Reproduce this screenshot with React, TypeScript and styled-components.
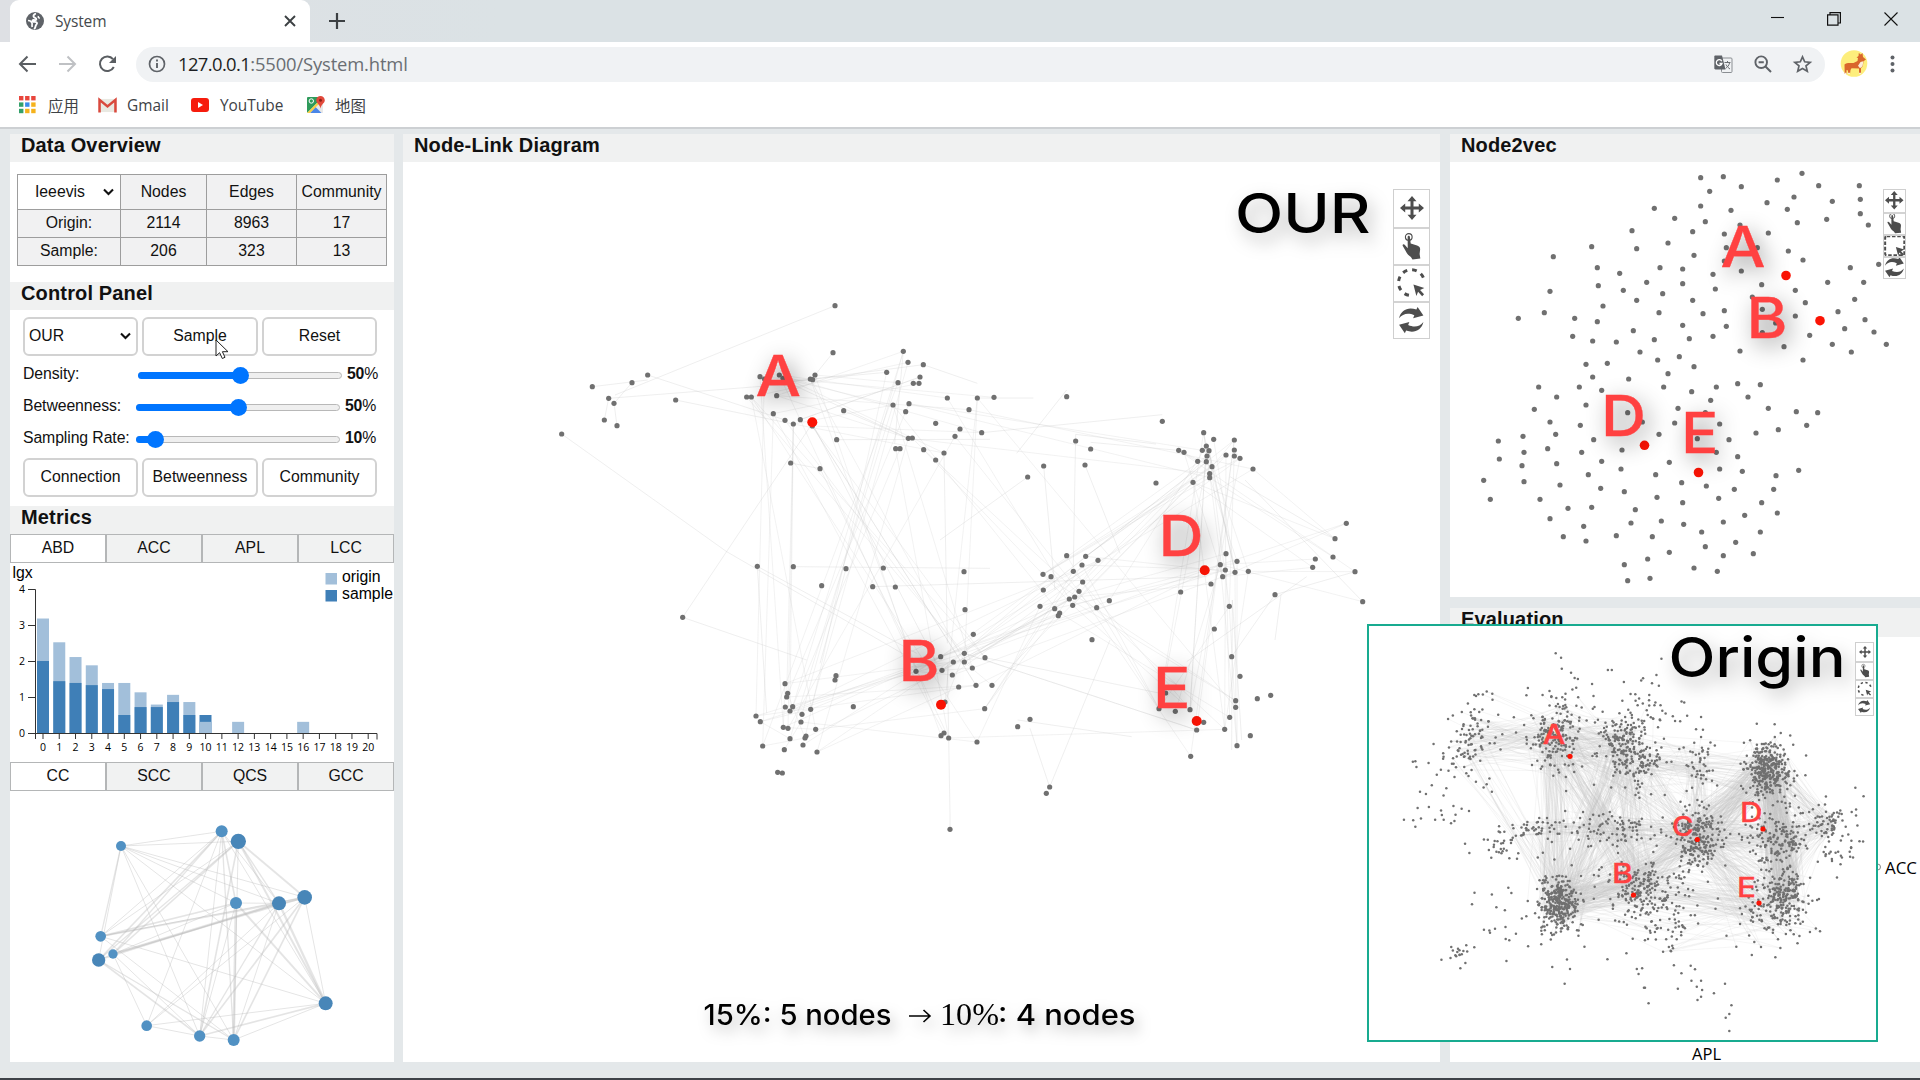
import React from 'react';
import styled, { createGlobalStyle, css } from 'styled-components';

/* ---------- base ---------- */

const Global = createGlobalStyle`
  * { box-sizing: border-box; }
  html, body { margin: 0; padding: 0; overflow: hidden; }
  body { font-family: "Liberation Sans", Arial, sans-serif; font-size: 15.8px; color: #111; }
  svg { display: block; flex: none; overflow: visible; }
`;

const uiFont = css`
  font-family: 'Open Sans', 'Noto Sans', 'Noto Sans CJK SC', sans-serif;
`;

const Window = styled.div`
  width: 1920px;
  height: 1080px;
  display: flex;
  flex-direction: column;
  background: #e4e8ea;
  border-bottom: 2px solid #3e4248;
  overflow: hidden;
  position: relative;
`;

/* ---------- browser chrome ---------- */

const TabStrip = styled.div`
  height: 42px;
  display: flex;
  align-items: stretch;
  padding-left: 10px;
  background: linear-gradient(90deg, #dee0e4 0, #dbe2e5 500px);
`;

const BrowserTab = styled.div`
  ${uiFont}
  width: 300px;
  display: flex;
  align-items: center;
  padding: 0 13px 0 16px;
  background: #fff;
  border-radius: 9px 9px 0 0;
  font-size: 15.5px;
  color: #45494d;
`;

const TabTitle = styled.span`
  flex: 1;
  margin-left: 11px;
  letter-spacing: -0.15px;
`;

const NewTab = styled.div`
  display: flex;
  align-items: center;
  margin-left: 19px;
`;

const WindowButtons = styled.div`
  display: flex;
  align-items: center;
  gap: 43px;
  margin-left: auto;
  padding: 0 22px 5px 0;
`;

const Toolbar = styled.div`
  height: 43px;
  display: flex;
  align-items: center;
  background: #fff;
  padding: 1px 17px 0 18px;
`;

const NavButtons = styled.div`
  display: flex;
  gap: 21px;
  width: 118px;
`;

const AddressBar = styled.div`
  width: 1689px;
  height: 35px;
  display: flex;
  align-items: center;
  border-radius: 18px;
  background: #f0f2f4;
  padding: 0 13px 0 12px;
`;

const Url = styled.span`
  ${uiFont}
  flex: 1;
  margin-left: 12px;
  padding-bottom: 2px;
  font-size: 18.4px;
  letter-spacing: -0.14px;
  color: #6a6e73;
  b { font-weight: 400; color: #1c1f23; letter-spacing: -0.6px; }
`;

const AddressActions = styled.div`
  display: flex;
  gap: 21px;
`;

const Profile = styled.div`
  display: flex;
  align-items: center;
  gap: 22px;
  margin-left: 15px;
`;

const Bookmarks = styled.div`
  ${uiFont}
  height: 44px;
  display: flex;
  align-items: center;
  background: #fff;
  border-bottom: 2px solid #cdd0d3;
  padding: 0 0 2px 19px;
  color: #3e4246;
  font-size: 15.4px;
`;

const Bookmark = styled.div<{ $w: number; $gap: number }>`
  display: flex;
  align-items: center;
  gap: ${(p) => p.$gap}px;
  width: ${(p) => p.$w}px;
`;

/* ---------- page ---------- */

const Page = styled.main`
  flex: 1;
  display: flex;
  padding: 5px 0 16px 10px;
`;

const Column = styled.section<{ $w: number; $left?: number }>`
  width: ${(p) => p.$w}px;
  margin-left: ${(p) => p.$left ?? 0}px;
  display: flex;
  flex-direction: column;
  flex: none;
`;

const PanelTitle = styled.h2<{ $h?: number }>`
  margin: 0;
  height: ${(p) => p.$h ?? 28}px;
  padding-left: 11px;
  background: #f0f1f1;
  font-size: 20px;
  line-height: 22px;
  letter-spacing: 0.15px;
  font-weight: 700;
  flex: none;
`;

const PanelBody = styled.div<{ $h: number }>`
  height: ${(p) => p.$h}px;
  background: #fff;
  position: relative;
  flex: none;
`;

const Spacer = styled.div<{ $h: number }>`
  height: ${(p) => p.$h}px;
  flex: none;
`;

const Overview = styled.div`
  padding: 12px 0 0 7px;
`;

const OverviewTable = styled.table`
  width: 370px;
  border-collapse: collapse;
  table-layout: fixed;
  background: #f1f1f2;
  th, td {
    border: 1px solid #9d9d9d;
    padding: 0 0 1px;
    height: 28px;
    line-height: 20px;
    text-align: center;
    font-weight: 400;
    white-space: nowrap;
  }
  th { height: 35px; }
`;

const DatasetCell = styled.th`
  background: #fff;
`;

const DatasetSelect = styled.div`
  display: flex;
  align-items: center;
  justify-content: flex-end;
  gap: 18px;
  padding-right: 6px;
`;

const ButtonRow = styled.div`
  display: flex;
  gap: 4px;
  padding-left: 13px;
`;

const PanelButton = styled.div<{ $select?: boolean }>`
  width: 115px;
  height: 39px;
  display: flex;
  align-items: center;
  justify-content: ${(p) => (p.$select ? 'space-between' : 'center')};
  padding: 0 ${(p) => (p.$select ? 5 : 0)}px 1px ${(p) => (p.$select ? 4 : 0)}px;
  border: 2px solid #d2d2d2;
  border-radius: 6px;
  background: #fff;
  &:nth-child(2) { width: 116px; }
`;

const Sliders = styled.div`
  padding: 2px 0 4px;
`;

const SliderRow = styled.div`
  height: 32px;
  display: flex;
  align-items: center;
  padding-left: 13px;
`;

const SliderLabel = styled.span<{ $w: number }>`
  width: ${(p) => p.$w}px;
  white-space: nowrap;
  letter-spacing: -0.1px;
`;

const Track = styled.div`
  width: 204px;
  height: 7px;
  margin-top: 3px;
  border: 1px solid #b8b8b8;
  border-radius: 4px;
  background: #efefef;
  display: flex;
  align-items: center;
`;

const Fill = styled.div`
  height: 7px;
  flex: none;
  margin-left: -1px;
  border-radius: 4px;
  background: #0075ff;
`;

const Thumb = styled.div`
  width: 17px;
  height: 17px;
  flex: none;
  margin-left: -9px;
  border-radius: 50%;
  background: #0075ff;
`;

const Percent = styled.span`
  margin-left: 5px;
  letter-spacing: -0.2px;
`;

const MetricTabs = styled.div`
  height: 29px;
  display: flex;
  flex: none;
`;

const MetricTab = styled.div<{ $active?: boolean }>`
  width: 96px;
  border: 1px solid #b4b6b7;
  background: ${(p) => (p.$active ? '#fff' : '#f1f2f2')};
  text-align: center;
  line-height: 25px;
`;

const ToolBox = styled.div<{ $size: number; $top: number; $right: number }>`
  position: absolute;
  top: ${(p) => p.$top}px;
  right: ${(p) => p.$right}px;
  width: ${(p) => p.$size}px;
  border: 1px solid #cfcfcf;
  background: #fff;
`;

const ToolCell = styled.div<{ $h: number }>`
  height: ${(p) => p.$h}px;
  display: flex;
  align-items: center;
  justify-content: center;
  padding-bottom: 1px;
  overflow: hidden;
  & + & { border-top: 2px solid #d3d3d3; }
`;

const OriginWindow = styled.div`
  position: absolute;
  left: 1367px;
  top: 624px;
  width: 511px;
  height: 418px;
  border: 2px solid #18ab90;
  background: #fff;
`;

const Pointer = styled.svg`
  position: absolute;
  left: 215px;
  top: 339px;
`;

const Mark = styled.text`
  font-family: Inter, 'Liberation Sans', sans-serif;
  font-weight: 500;
  fill: #ff4141;
  stroke: #ff4141;
  stroke-width: 0.3px;
`;

const Title = styled(Mark)`
  fill: #000;
  stroke: none;
`;

const Shadow = styled.g`
  filter: drop-shadow(5px 7px 11px rgba(0, 0, 0, 0.42));
`;

const TitleShadow = styled.g`
  filter: drop-shadow(5px 8px 9px rgba(0, 0, 0, 0.27));
`;

const CaptionShadow = styled.g`
  filter: drop-shadow(4px 7px 7px rgba(0, 0, 0, 0.27));
`;

const MathText = styled.text`
  font-family: 'Liberation Serif', serif;
  font-size: 31px;
`;

const AxisText = styled.text`
  font-family: 'Open Sans', 'Noto Sans', sans-serif;
  font-size: 10.5px;
`;

/* ---------- icons ---------- */

const Chevron = () => (
  <svg width="11" height="8" viewBox="0 0 11 8">
    <path d="M1 1.500 5.500 6 10 1.500" fill="none" stroke="#111" strokeWidth="2.100" />
  </svg>
);

const Globe = () => (
  <svg width="18" height="18" viewBox="0 0 18 18">
    <circle cx="9" cy="9" r="9" fill="#5f6368" />
    <path d="M9.200 1.800C7.500 2.600 7 4 8 5.200c.8.900 2.400.6 2.300 2-.1 1.100-1.500.9-2.500.8-1.300-.1-1.700.8-1 1.500.9.800 3-.2 4 1 .8 1.100-.4 2-.9 2.800-.6 1-.3 2.300-1.300 3.100" fill="none" stroke="#fff" strokeWidth="1.900" strokeLinecap="round" />
    <path d="M2 8.500c1.800 0 3.500 1 4 2.500.4 1.400-.3 2.200.2 4" fill="none" stroke="#fff" strokeWidth="1.700" />
    <path d="M12.500 4c-.7 1.300.2 2 1.300 2.200" fill="none" stroke="#fff" strokeWidth="1.500" />
  </svg>
);

const MoveIcon = ({ s }: { s: number }) => (
  <svg width={s} height={s} viewBox="0 0 24 24" fill="#4d4d4d">
    <path d="M12 0 7.500 5.200h3v5.300H5.200v-3L0 12l5.200 4.500v-3h5.300v5.300h-3L12 24l4.500-5.200h-3v-5.300h5.300v3L24 12l-5.200-4.500v3h-5.300V5.200h3z" />
  </svg>
);

const TouchIcon = ({ s }: { s: number }) => (
  <svg width={s * 0.72} height={s} viewBox="0 0 18 26">
    <circle cx="6.300" cy="3.900" r="3.300" fill="none" stroke="#4d4d4d" strokeWidth="1.100" />
    <path d="M5.200 3.800c.1-1.500 2.100-1.500 2.200 0l.8 6.600 6.300 2c2.400.8 3.100 1.900 3 3.900l-.5 4.400.7 4.500-7.700.8-1.600-2.400c-2.400-1.500-4-3.300-5-5.600L.3 12.500c-.4-1.600 1.300-1.900 2.200-.7l2.800 3.300z" fill="#4d4d4d" />
  </svg>
);

const Arrowhead = <path d="M15.500 15.500 26.500 19l-4.300 2.100 4 4.400-1.900 1.800-4.100-4.300-1.700 4.100z" fill="#4d4d4d" />;

const LassoIcon = ({ s, square }: { s: number; square?: boolean }) => (
  <svg width={s} height={s} viewBox="0 0 28 28">
    {square ? (
      <rect x="1.500" y="1.500" width="25" height="25" rx="2" fill="none" stroke="#4d4d4d" strokeWidth="2.600" strokeDasharray="4.600 2.300" />
    ) : (
      <path d="M11 26.500A13 13 0 1 1 26.500 13" fill="none" stroke="#4d4d4d" strokeWidth="3" strokeDasharray="4.700 5" />
    )}
    {Arrowhead}
  </svg>
);

const SwapIcon = ({ s }: { s: number }) => (
  <svg width={s} height={s * 1.07} viewBox="0 0 26 28" fill="#4d4d4d">
    <path d="M0 12C2 3 10-.5 18.500 2.800L19.800 0 26 9l-11 3 1.300-3.300C9.500 5.700 4 7 0 12z" />
    <path d="M26 16c-2 9-10 12.500-18.500 9.200L6.200 28 0 19l11-3-1.300 3.300C16.500 22.300 22 21 26 16z" />
  </svg>
);

const Tools = ({ size, cell, top, right, icon, square }: { size: number; cell: number; top: number; right: number; icon: number; square?: boolean }) => (
  <ToolBox $size={size} $top={top} $right={right}>
    <ToolCell $h={cell}><MoveIcon s={icon} /></ToolCell>
    <ToolCell $h={cell}><TouchIcon s={icon * 1.1} /></ToolCell>
    <ToolCell $h={cell}><LassoIcon s={icon * 1.16} square={square} /></ToolCell>
    <ToolCell $h={cell}><SwapIcon s={icon * 1.02} /></ToolCell>
  </ToolBox>
);

/* ---------- graph data ---------- */

type Pt = [number, number];

const place = (flat: string, ox: number, oy: number, sx = 3, sy = 3): Pt[] =>
  flat.trim().split(/\s+/).map((p) => {
    const [x, y] = p.split(',').map(Number);
    return [ox + x / sx, oy + y / sy] as Pt;
  });

const upperLeft = place(
  `885,77 879,218 825,285 811,297 818,299 660,290 673,297 718,285 729,295 620,351 634,351 710,347 700,401 735,421
   760,432 781,419 817,438 752,549 840,566 890,479 911,392 157,320 206,355 222,370 276,308 323,285 407,360 193,420
   231,437 65,462 428,1012 652,859 760,860 845,917 918,866 1030,864 998,920 1066,921 1090,214 1104,247 1150,254
   1040,277 1140,291 1074,308 1120,310 1137,310 1107,371 1059,375 1097,395 1105,475 1117,474 1067,506 1080,506
   1151,509 1212,519 1187,540 1187,430 1245,469 1260,447 1222,354 1312,354 1287,389 1325,458 1272,875 1275,989
   1300,1063 1273,1120 1202,1130 1240,1146 1273,1146 1297,1164 1206,1171 1237,1185 1128,1174 1335,1133 888,1187`,
  540, 280,
);

const right = place(
  `102,52 320,50 607,124 347,183 392,207 375,255 251,258 203,291 656,211 672,217 588,309 699,307 713,244 731,158
   761,178 823,180 739,198 727,211 747,212 741,228 739,245 756,260 749,281 749,293 798,225 823,210 823,228 840,235
   879,267 1159,430 1125,476 1119,531 1066,537 1058,562 1185,575 1208,665 945,644 798,521 831,544 781,554 796,570
   825,577 865,574 788,590 753,612 808,679 662,636 763,747 815,830 840,889 320,527 377,529 414,541 366,555 340,574
   249,583 273,590 368,606 250,630 357,634 344,651 328,657 284,686 299,699 295,707 338,676 240,679 410,683 448,662
   396,779 617,939 597,986 646,994 690,989 710,1050 731,1027 692,1129 827,962 827,982 809,1012 794,1048 831,1097
   871,1067 892,956 932,946 210,1018 173,1040 269,1221 259,1240 96,916`,
  960, 380,
);

const lowerLeft = place(
  `435,431 443,460 440,471 436,501 458,500 450,513 512,508 486,523 483,546 348,528 361,545 430,562 444,565 527,568
   498,588 495,594 450,596 489,615 368,618 433,629 531,636 413,697 427,699 585,420 640,500 956,441 1008,436 915,486
   912,579 903,587 926,594 1011,606 1034,506 930,868`,
  640, 540,
);

const sample: Pt[] = [...upperLeft, ...right, ...lowerLeft];

const within = (pts: Pt[], x0: number, y0: number, x1: number, y1: number) =>
  pts.filter(([x, y]) => x >= x0 && x <= x1 && y >= y0 && y <= y1);

const makeRandom = (seed: number) => () => {
  seed = (seed * 1664525 + 1013904223) % 4294967296;
  return seed / 4294967296;
};

const zones = {
  a: within(sample, 740, 360, 830, 430),
  mid: within(sample, 880, 345, 1005, 465),
  sw: within(sample, 750, 680, 820, 760),
  b: within(sample, 900, 640, 1000, 745),
  c: within(sample, 1035, 550, 1115, 620),
  ne: within(sample, 1170, 425, 1260, 485),
  d: within(sample, 1200, 550, 1250, 610),
  e: within(sample, 1150, 690, 1250, 760),
  east: within(sample, 1300, 515, 1370, 605),
};

type Zone = keyof typeof zones;
const links: [Zone, Zone, number][] = [
  ['a', 'mid', 16], ['a', 'sw', 7], ['a', 'b', 12], ['mid', 'sw', 10], ['mid', 'b', 4], ['mid', 'ne', 4],
  ['sw', 'b', 11], ['sw', 'c', 6], ['b', 'c', 13], ['c', 'ne', 11], ['c', 'd', 6], ['c', 'e', 8],
  ['ne', 'd', 10], ['ne', 'e', 9], ['d', 'e', 8], ['d', 'east', 6], ['ne', 'east', 5], ['b', 'd', 4],
  ['b', 'ne', 4], ['mid', 'e', 2], ['mid', 'c', 4], ['ne', 'ne', 8], ['sw', 'sw', 8], ['b', 'b', 6], ['b', 'e', 3],
];

const rnd = makeRandom(41);
const pick = <T,>(list: T[], r: () => number) => list[Math.floor(r() * list.length)];
const sampleEdges = links.flatMap(([from, to, n]) =>
  Array.from({ length: n }, () => [pick(zones[from], rnd), pick(zones[to], rnd)] as [Pt, Pt]),
);

const singles = place(
  `885,77 225,345 157,320 323,300 323,285 735,420 276,308 222,370 206,355 715,315 206,355 193,420 222,370 231,437
   407,360 760,432 65,462 560,815 560,815 1095,1125 428,1012 817,430 428,1012 800,1140 652,859 1130,1120 760,860 1350,865
   998,920 2000,890 879,218 825,285 911,392 1105,475 728,300 1105,475 1040,277 728,305 1150,254 760,305 1090,214 1064,490
   752,549 840,566 840,566 1110,1110 817,430 1190,1150 890,479 1350,478 918,866 840,1150 1212,519 1222,1090 1150,254 1312,310
   652,859 680,1300 1325,458 1867,404 1312,354 1480,354 1607,463 1848,492 1607,463 1600,860 1511,558 1545,930 1635,555 1740,820
   1652,487 1915,511 1463,591 1200,780 1580,330 1430,520 1222,1150 1230,1600 2077,960 2105,1380 2077,960 2075,1410
   1775,1370 1433,1320 1529,1521 1470,1345 1529,1521 1710,1080 1335,1133 1857,1239 2223,944 2205,1080 2205,944 2075,1130
   1940,1145 2300,890 2468,965 2115,600 2385,776 2070,590 1230,1600 1230,1648 2205,944 2445,875`,
  540, 280,
);

const n2v = place(
  `782,53 850,50 904,80 1012,60 1086,40 1136,77 1258,77 809,94 782,138 873,151 981,128 1062,111 1042,148 1177,124
   1261,118 1261,161 1285,195 1160,178 1072,188 643,145 704,175 796,185 758,215 853,222 900,195 985,219 576,212 684,249
   590,266 455,260 340,290 859,263 952,263 762,286 1045,273 1089,300 853,303 472,323 539,340 660,323 728,327 819,343
   904,333 475,377 550,391 620,367 668,401 728,371 826,387 965,374 1066,391 1163,367 1231,323 1316,313 1271,367 330,394
   590,421 489,438 758,421 853,452 937,411 967,448 1007,489 967,518 1096,428 1244,418 1194,455 1275,479 313,458 235,475
   404,475 472,485 657,458 789,461 859,499 1066,468 1214,506 1302,516 398,529 458,543 529,546 580,512 643,539 728,496
   748,536 819,529 1109,526 1177,553 1234,576 1339,553 600,576 653,600 718,590 762,620 900,573 1032,560 1089,600 438,613
   502,610 458,651 566,657 684,641 296,681 418,681 485,691 671,681 755,695 829,681 893,671 961,674 924,711 812,721
   350,711 283,748 438,735 563,758 714,745 796,758 985,745 1069,755 1133,758 330,786 421,796 607,786 704,789 839,792
   1100,796 1015,809 948,819 175,843 249,829 347,823 461,839 657,823 772,836 867,839 323,866 252,877 425,877 546,870
   829,877 893,890 178,897 246,917 350,911 485,904 543,927 688,907 839,927 907,934 1008,947 1076,931 131,961 252,965
   360,975 445,944 647,944 725,968 799,978 883,988 1001,988 482,985 553,995 151,1018 300,1018 651,1012 728,1028
   836,1015 965,1028 1012,1059 384,1045 455,1042 586,1049 330,1076 431,1099 573,1089 664,1083 731,1093 785,1116
   850,1086 914,1066 961,1116 370,1130 438,1143 529,1127 637,1130 796,1160 887,1147 940,1181 850,1187 688,1177 623,1197
   553,1214 762,1224 832,1234 630,1255 563,1262`,
  1440, 160,
);

/* full network: dense communities, each with centre, spread and node count */
const communities: [number, number, number, number, number][] = [
  [300, 430, 24, 50, 55], [340, 400, 50, 60, 40], [545, 420, 34, 52, 150], [600, 340, 60, 50, 45], [730, 420, 32, 44, 120],
  [770, 480, 42, 46, 120], [800, 330, 48, 45, 40], [950, 480, 22, 40, 45], [1140, 500, 25, 36, 210], [1145, 530, 38, 44, 110],
  [945, 710, 30, 38, 170], [950, 740, 50, 60, 60], [1190, 710, 34, 36, 90], [1130, 710, 35, 40, 60], [1305, 670, 24, 24, 45],
  [1340, 700, 46, 60, 45], [1185, 880, 26, 36, 150], [1160, 930, 50, 50, 120], [775, 850, 28, 30, 85], [770, 890, 50, 52, 80],
  [553, 900, 24, 35, 190], [555, 930, 38, 46, 130], [490, 690, 30, 15, 40], [405, 735, 28, 24, 28], [700, 685, 75, 26, 75],
  [870, 940, 38, 60, 75], [280, 1055, 16, 10, 14], [245, 645, 50, 16, 12], [250, 530, 55, 50, 14], [740, 1030, 120, 40, 16],
  [720, 740, 240, 70, 45], [420, 960, 60, 60, 14],
];

const dense = makeRandom(7);
const bell = () => (dense() + dense() + dense() + dense() - 2) * 1.75;
const originNodes: Pt[][] = communities.map(([cx, cy, sx, sy, n]) =>
  Array.from({ length: n }, () => [1360 + (cx + bell() * sx) / 2.8, 600 + (cy + bell() * sy) / 3] as Pt),
);
const outliers = place(
  `548,160 563,173 565,206 844,176 694,210 705,210 830,225 610,237 470,264 588,1107 573,1151 808,1210 1034,1293 1024,1253
   1034,1242 1040,1216 1022,1151 991,1180 945,1200 955,1190 890,1166 926,1097 938,1108 1163,1072 123,659 149,661 155,680
   148,485 155,484 192,489 168,575 1410,589 1387,563 281,1105 228,1079 775,1107 790,1105 780,1122 795,1163 798,1163 955,1142
   943,1160 958,1170 928,1142 900,1120 916,347 955,351 941,388 1111,371 1161,373 1075,428 1213,434 347,989 378,986 408,1017
   418,1021 320,1042 295,1089 1104,1026 1225,1030 1280,900 1285,897 325,288 371,299 387,344 206,432 233,460 215,524 201,556`,
  1360, 600, 2.8, 3,
);
const originLinks: [number, number, number][] = [
  [0, 2, 70], [1, 5, 22], [2, 4, 110], [2, 21, 65], [2, 18, 95], [4, 21, 70], [4, 18, 40], [5, 24, 40], [5, 9, 50],
  [8, 10, 210], [8, 12, 130], [8, 16, 140], [8, 14, 60], [10, 18, 90], [10, 20, 60], [10, 12, 75], [10, 17, 130], [12, 16, 120],
  [12, 14, 60], [16, 14, 22], [18, 20, 100], [18, 17, 55], [20, 24, 60], [22, 24, 35], [24, 10, 40], [0, 20, 18], [7, 10, 45],
  [7, 5, 20], [25, 17, 40], [2, 10, 35], [22, 20, 30], [20, 25, 40], [5, 10, 40], [12, 24, 30],
];
const originEdges = originLinks
  .flatMap(([a, b, n]) =>
    Array.from({ length: n }, () => {
      const p = pick(originNodes[a], dense);
      const q = pick(originNodes[b], dense);
      return `M${p[0].toFixed(1)} ${p[1].toFixed(1)}L${q[0].toFixed(1)} ${q[1].toFixed(1)}`;
    }),
  );

const Dots = ({ pts, r }: { pts: Pt[]; r: number }) => (
  <g fill="#707070">
    {pts.map(([x, y], i) => <circle key={i} cx={x} cy={y} r={r} />)}
  </g>
);

const Reds = ({ pts, r }: { pts: Pt[]; r: number }) => (
  <g fill="#fb1405">
    {pts.map(([x, y], i) => <circle key={i} cx={x} cy={y} r={r} />)}
  </g>
);

type Letter = [string, number, number, number];
const Letters = ({ items, size }: { items: Letter[]; size: number }) => (
  <>
    {items.map(([c, x, y, w]) => (
      <Mark key={c} x={x} y={y} fontSize={size} textLength={w} lengthAdjust="spacingAndGlyphs">{c}</Mark>
    ))}
  </>
);

/* ---------- panels ---------- */

const NodeLink = () => (
  <svg width="1037" height="900" viewBox="403 162 1037 900">
    <g stroke="#c4c4c4" strokeWidth="0.8">
      {sampleEdges.map(([p, q], i) => <line key={i} x1={p[0]} y1={p[1]} x2={q[0]} y2={q[1]} opacity="0.270" />)}
      {singles.map((p, i) => (i % 2 ? null : <line key={`s${i}`} x1={p[0]} y1={p[1]} x2={singles[i + 1][0]} y2={singles[i + 1][1]} opacity="0.340" />))}
    </g>
    <Dots pts={sample} r={2.6} />
    <Reds pts={[[812.3, 422.3], [941, 704.7], [1204.7, 570.3], [1196.7, 721]]} r={5} />
    <Shadow>
      <Letters size={56} items={[['A', 755.500, 396, 45.500], ['B', 898.500, 681, 41], ['D', 1158.500, 556, 45], ['E', 1153, 707.700, 37.500]]} />
    </Shadow>
    <TitleShadow>
      <Title x="1235" y="232.500" fontSize="55" textLength="135.500" lengthAdjust="spacingAndGlyphs">OUR</Title>
    </TitleShadow>
    <CaptionShadow>
      <Title x="703.500" y="1024.500" fontSize="28" textLength="188" lengthAdjust="spacingAndGlyphs">15%: 5 nodes</Title>
      <path d="M909 1016h21m-6.500-6 6.500 6-6.500 6" fill="none" stroke="#000" strokeWidth="1.600" />
      <MathText x="940" y="1025" textLength="59" lengthAdjust="spacingAndGlyphs">10%</MathText>
      <Title x="998" y="1024.500" fontSize="28" textLength="137.500" lengthAdjust="spacingAndGlyphs">: 4 nodes</Title>
    </CaptionShadow>
  </svg>
);

const Node2vec = () => (
  <svg width="470" height="435" viewBox="1450 162 470 435">
    <Dots pts={n2v} r={2.6} />
    <Reds pts={[[1786, 275.5], [1820, 320.7], [1644.5, 445.3], [1698.5, 472.5]]} r={4.800} />
    <Shadow>
      <Letters size={56} items={[['A', 1720.500, 267, 45], ['B', 1746.500, 338, 41], ['D', 1601, 436, 45], ['E', 1681, 453, 37.500]]} />
    </Shadow>
  </svg>
);

const OriginNetwork = () => (
  <svg width="507" height="414" viewBox="1369 626 507 414">
    <g fill="none" stroke="#c4c4c4" strokeWidth="0.800">
      {originEdges.map((d, i) => <path key={i} d={d} opacity="0.200" />)}
    </g>
    <Dots pts={[...originNodes.flat(), ...outliers]} r={1.250} />
    <Letters size={27} items={[['A', 1542.500, 743.700, 23], ['B', 1612, 883, 21], ['C', 1672, 835.500, 21.500], ['D', 1740, 821.700, 22.500], ['E', 1737, 896.700, 19]]} />
    <Reds pts={[[1570, 756.300], [1697.300, 839.500], [1763, 829], [1633.500, 895], [1759, 903]]} r={2.600} />
    <TitleShadow>
      <Title x="1668.500" y="676.500" fontSize="55" textLength="177" lengthAdjust="spacingAndGlyphs">Origin</Title>
    </TitleShadow>
  </svg>
);

const originBars: [number, number][] = [[0, 3.18], [1, 2.52], [2, 2.11], [3, 1.88], [4, 1.39], [5, 1.39], [6, 1.13], [7, 0.79], [8, 1.06], [9, 0.86], [10, 0.31], [12, 0.31], [16, 0.31]];
const sampleBars = [2, 1.44, 1.39, 1.33, 1.22, 0.5, 0.72, 0.72, 0.86, 0.5];

const BarChart = () => (
  <svg width="384" height="199" viewBox="10 563 384 199">
    <rect x="199.500" y="715" width="12" height="18" fill="#3f7fb7" />
    {originBars.map(([i, v]) => <rect key={i} x={37 + i * 16.26} y={733 - v * 36} width="12" height={v * 36} fill="#a2bfda" />)}
    {sampleBars.map((v, i) => <rect key={i} x={37 + i * 16.26} y={733 - v * 36} width="12" height={v * 36} fill="#3f7fb7" />)}
    <path d="M28 589.500h7.500v144H28M35.500 733.500h341.500v6M35.500 733v6" fill="none" stroke="#333" />
    {[0, 1, 2, 3].map((v) => (
      <line key={v} x1="28" x2="35" y1={733.500 - v * 36} y2={733.500 - v * 36} stroke="#333" />
    ))}
    {[0, 1, 2, 3, 4].map((v) => <AxisText key={v} x="25" y={737 - v * 36} textAnchor="end">{v}</AxisText>)}
    {Array.from({ length: 21 }, (_, i) => (
      <React.Fragment key={i}>
        <line x1={43 + i * 16.26} x2={43 + i * 16.26} y1="733" y2="739" stroke="#333" />
        <AxisText x={43 + i * 16.26} y="751" textAnchor="middle">{i}</AxisText>
      </React.Fragment>
    ))}
    <text x="12.500" y="577.500">lgx</text>
    <rect x="325.500" y="573" width="11.500" height="11.500" fill="#a2bfda" />
    <rect x="325.500" y="590" width="11.500" height="11.500" fill="#3f7fb7" />
    <text x="342" y="581.500">origin</text>
    <text x="342" y="598.500">sample</text>
  </svg>
);

const ccNodes: [number, number, number][] = [
  [363, 198, 15], [665, 154, 18], [715, 184, 23], [708, 369, 18], [837, 370, 21], [914, 352, 22], [302, 469, 16],
  [339, 522, 14], [296, 540, 20], [440, 737, 16], [599, 768, 17], [701, 780, 18], [977, 670, 21],
];
const ccEdges: [number, number, number][] = [
  [0, 1, 3], [0, 2, 3], [0, 3, 3], [0, 4, 3], [0, 5, 3], [0, 6, 4], [0, 8, 3], [0, 10, 3], [0, 11, 3], [0, 12, 3], [1, 6, 3],
  [1, 7, 4], [1, 8, 5], [1, 3, 5], [1, 4, 3], [1, 9, 3], [1, 10, 3], [1, 11, 4], [1, 12, 3], [2, 6, 3], [2, 7, 5], [2, 8, 4],
  [2, 5, 6], [2, 12, 6], [2, 4, 4], [2, 10, 5], [2, 11, 3], [3, 4, 3], [3, 6, 5], [3, 7, 3], [3, 10, 3], [3, 11, 8], [3, 12, 6],
  [4, 5, 8], [4, 6, 5], [4, 7, 7], [4, 8, 4], [4, 9, 3], [4, 10, 4], [4, 11, 3], [4, 12, 7], [5, 6, 3], [5, 7, 5], [5, 9, 3],
  [5, 10, 5], [5, 11, 5], [5, 12, 3], [6, 12, 3], [6, 11, 3], [7, 9, 3], [7, 8, 3], [7, 10, 3], [8, 10, 5], [8, 11, 4],
  [9, 10, 3], [9, 12, 3], [10, 11, 3], [10, 12, 5], [11, 12, 3],
];

const CommunityGraph = () => (
  <svg width="384" height="271" viewBox="30 33 1152 813">
    <g stroke="#bbb">
      {ccEdges.map(([a, b, w], i) => (
        <line key={i} x1={ccNodes[a][0]} y1={ccNodes[a][1]} x2={ccNodes[b][0]} y2={ccNodes[b][1]} strokeWidth={w} opacity="0.38" />
      ))}
    </g>
    {ccNodes.map(([x, y, r], i) => <circle key={i} cx={x} cy={y} r={r} fill={r < 19 ? '#5191c3' : '#4886b8'} />)}
  </svg>
);

const Evaluation = () => (
  <svg width="470" height="425" viewBox="1450 637 470 425">
    <circle cx="1877.500" cy="867" r="3" fill="none" stroke="#888" />
    <g fontFamily="'Open Sans', 'Noto Sans', sans-serif" fontSize="16">
      <text x="1885" y="874" textLength="32" lengthAdjust="spacingAndGlyphs">ACC</text>
      <text x="1692" y="1059.500" textLength="29" lengthAdjust="spacingAndGlyphs">APL</text>
    </g>
  </svg>
);

const Slider = ({ label, labelWidth, at, value }: { label: string; labelWidth: number; at: number; value: number }) => (
  <SliderRow>
    <SliderLabel $w={labelWidth}>{label}</SliderLabel>
    <Track><Fill style={{ width: at }} /><Thumb /></Track>
    <Percent><b>{value}</b>%</Percent>
  </SliderRow>
);

const Tabs = ({ names }: { names: string[] }) => (
  <MetricTabs>{names.map((n, i) => <MetricTab key={n} $active={i === 0}>{n}</MetricTab>)}</MetricTabs>
);

const Browser = () => (
  <>
    <TabStrip>
      <BrowserTab>
        <Globe />
        <TabTitle>System</TabTitle>
        <svg width="14" height="14" viewBox="0 0 14 14"><path d="m2 2 10 10M12 2 2 12" stroke="#3c4043" strokeWidth="1.900" /></svg>
      </BrowserTab>
      <NewTab><svg width="16" height="16" viewBox="0 0 16 16"><path d="M8 0v16M0 8h16" stroke="#3c4043" strokeWidth="2.200" /></svg></NewTab>
      <WindowButtons>
        <svg width="13" height="13" viewBox="0 0 13 13"><path d="M0 5.500h13" stroke="#111" strokeWidth="1.100" /></svg>
        <svg width="14" height="14" viewBox="0 0 14 14"><path d="M.6 2.800h10.400v10.400H.6zM3 2.500V.6h10.400V11H11.200" fill="none" stroke="#111" strokeWidth="1.200" /></svg>
        <svg width="14" height="14" viewBox="0 0 14 14"><path d="m.5.5 13 13M13.500.5l-13 13" stroke="#111" strokeWidth="1.100" /></svg>
      </WindowButtons>
    </TabStrip>
    <Toolbar>
      <NavButtons>
        <svg width="19" height="18" viewBox="0 0 19 18"><path d="M18 9H2.500M9.500 1.500 2 9l7.500 7.500" fill="none" stroke="#5a5e62" strokeWidth="2" /></svg>
        <svg width="19" height="18" viewBox="0 0 19 18"><path d="M1 9h15.500M9.500 1.500 17 9l-7.500 7.500" fill="none" stroke="#bfc1c4" strokeWidth="2" /></svg>
        <svg width="19" height="18" viewBox="0 0 19 18"><path d="M15.800 12A7.300 7.300 0 1 1 15 4.200" fill="none" stroke="#5a5e62" strokeWidth="2" /><path d="M18 1v7h-7z" fill="#5a5e62" /></svg>
      </NavButtons>
      <AddressBar>
        <svg width="18" height="18" viewBox="0 0 18 18"><circle cx="9" cy="9" r="7.500" fill="none" stroke="#5f6368" strokeWidth="1.700" /><path d="M9 8v5M9 4.600v1.900" stroke="#5f6368" strokeWidth="1.900" /></svg>
        <Url><b>127.0.0.1</b>:5500/System.html</Url>
        <AddressActions>
          <svg width="19" height="19" viewBox="0 0 19 19">
            <rect x="7.500" y="3" width="10.500" height="14.500" rx="1" fill="#f0f2f4" stroke="#8a8e92" />
            <path d="M1.500.5H8l3.500 14h-10c-.8 0-1.200-.5-1.200-1.200V1.600C.3.900.8.500 1.500.5z" fill="#5f6368" />
            <path d="M7.800 6.200A2.900 2.900 0 1 0 8 8.500H5.500" fill="none" stroke="#fff" strokeWidth="1.300" />
            <path d="M10.500 7.500h6M13.500 6v1.500M15.500 8c-.5 2.500-2 4-4 5.500M12 9.500c1 2 2.500 3.500 4 4.500" fill="none" stroke="#6b6f73" />
          </svg>
          <svg width="18" height="18" viewBox="0 0 18 18"><circle cx="7.200" cy="7.200" r="5.800" fill="none" stroke="#5f6368" strokeWidth="1.900" /><path d="m11.500 11.500 5.500 5.500M4.600 7.200h5.200" stroke="#5f6368" strokeWidth="2" /></svg>
          <svg width="19" height="18" viewBox="0 0 19 18"><path d="m9.500 1.800 2.200 5 5.500.5-4.200 3.600 1.300 5.300-4.800-2.800-4.800 2.800L6 10.900 1.800 7.300l5.500-.5z" fill="none" stroke="#5f6368" strokeWidth="1.700" /></svg>
        </AddressActions>
      </AddressBar>
      <Profile>
        <svg width="28" height="28" viewBox="0 0 28 28">
          <circle cx="14" cy="13.500" r="13.300" fill="#fdee7c" />
          <path d="M4.500 14.500c2-2 5-1.500 9-1.500l4-2 .5-3-1.500-.6L18.500 6l.3-3 2 1.500L22.500 3l.5 4 3 2.500-2.500 1.700-.7 5-1.800 1.800V24h-2v-5.500l-7.500-.3-1 1.800-.5 4H8v-3.500l-1.500-.5V24H4.700z" fill="#d9672c" />
          <path d="M20.500 12 23.300 11.300l-.7 5-2.600 2-2-2.500zM4.700 22.800h1.800V24H4.700zM8 22.800h2V24H8zM19 22.800h2V24h-2z" fill="#fbeed8" />
        </svg>
        <svg width="5" height="18" viewBox="0 0 5 18" fill="#5f6368"><circle cx="2.500" cy="2.500" r="2" /><circle cx="2.500" cy="9" r="2" /><circle cx="2.500" cy="15.500" r="2" /></svg>
      </Profile>
    </Toolbar>
    <Bookmarks>
      <Bookmark $w={79} $gap={11}>
        <svg width="18" height="18" viewBox="0 0 18 18">
          {['#e8453c', '#e8453c', '#e8453c', '#34a06a', '#3b8bea', '#f5b21c', '#34a06a', '#f5b21c', '#f5b21c'].map((c, i) => (
            <rect key={i} x={(i % 3) * 6.100} y={Math.floor(i / 3) * 6.400} width="4.400" height="4.400" fill={c} />
          ))}
        </svg>
        应用
      </Bookmark>
      <Bookmark $w={93} $gap={10}>
        <svg width="19" height="15" viewBox="0 0 20 16"><rect x="1" y="1" width="18" height="14" fill="#e9e9e2" /><path d="M1.500 15.500V2L10 9l8.500-7v13.500" fill="none" stroke="#d9493d" strokeWidth="2.700" /></svg>
        Gmail
      </Bookmark>
      <Bookmark $w={116} $gap={11}>
        <svg width="18" height="14" viewBox="0 0 18 14"><rect width="18" height="14" rx="3" fill="#f61c0d" /><path d="m7 4 5 3-5 3z" fill="#fff" /></svg>
        YouTube
      </Bookmark>
      <Bookmark $w={90} $gap={10}>
        <svg width="18" height="18" viewBox="0 0 18 18">
          <rect y="1" width="16" height="16" rx="1" fill="#2f9b5b" />
          <path d="M0 17 16 1v16z" fill="#e8e8e8" /><path d="M3 17 8.500 11l6 6z" fill="#4a86e8" /><path d="m0 17 14-14v3L3 17z" fill="#f8cf45" />
          <circle cx="4.300" cy="5" r="2.200" fill="none" stroke="#fff" strokeWidth="1" />
          <path d="M13.500 0a4.300 4.300 0 0 1 4.300 4.300c0 3-3.600 3.700-4.300 8.200-.7-4.500-4.300-5.200-4.300-8.200A4.300 4.300 0 0 1 13.500 0z" fill="#e2493b" /><circle cx="13.500" cy="4.300" r="1.500" fill="#8e2018" />
        </svg>
        地图
      </Bookmark>
    </Bookmarks>
  </>
);

export default function App() {
  return (
    <Window>
      <Global />
      <Browser />
      <Page>
        <Column $w={384}>
          <PanelTitle>Data Overview</PanelTitle>
          <PanelBody $h={120}>
            <Overview>
              <OverviewTable>
                <colgroup><col width="103" /><col width="86" /><col width="90" /><col width="90" /></colgroup>
                <tbody>
                  <tr><DatasetCell><DatasetSelect>Ieeevis <Chevron /></DatasetSelect></DatasetCell><th>Nodes</th><th>Edges</th><th>Community</th></tr>
                  <tr><td>Origin:</td><td>2114</td><td>8963</td><td>17</td></tr>
                  <tr><td>Sample:</td><td>206</td><td>323</td><td>13</td></tr>
                </tbody>
              </OverviewTable>
            </Overview>
          </PanelBody>
          <PanelTitle>Control Panel</PanelTitle>
          <PanelBody $h={196}>
            <Spacer $h={7} />
            <ButtonRow>
              <PanelButton $select>OUR <Chevron /></PanelButton>
              <PanelButton>Sample</PanelButton>
              <PanelButton>Reset</PanelButton>
            </ButtonRow>
            <Sliders>
              <Slider label="Density:" labelWidth={115} at={103} value={50} />
              <Slider label="Betweenness:" labelWidth={113} at={103} value={50} />
              <Slider label="Sampling Rate:" labelWidth={113} at={20} value={10} />
            </Sliders>
            <ButtonRow>
              <PanelButton>Connection</PanelButton>
              <PanelButton>Betweenness</PanelButton>
              <PanelButton>Community</PanelButton>
            </ButtonRow>
          </PanelBody>
          <PanelTitle>Metrics</PanelTitle>
          <Tabs names={['ABD', 'ACC', 'APL', 'LCC']} />
          <PanelBody $h={199}><BarChart /></PanelBody>
          <Tabs names={['CC', 'SCC', 'QCS', 'GCC']} />
          <PanelBody $h={271}><CommunityGraph /></PanelBody>
        </Column>
        <Column $w={1037} $left={9}>
          <PanelTitle>Node-Link Diagram</PanelTitle>
          <PanelBody $h={900}>
            <NodeLink />
            <Tools size={37} cell={37} top={27} right={10} icon={24} />
          </PanelBody>
        </Column>
        <Column $w={470} $left={10}>
          <PanelTitle>Node2vec</PanelTitle>
          <PanelBody $h={435}>
            <Node2vec />
            <Tools size={23} cell={22} top={27} right={14} icon={18.500} square />
          </PanelBody>
          <Spacer $h={11} />
          <PanelTitle $h={29}>Evaluation</PanelTitle>
          <PanelBody $h={425}><Evaluation /></PanelBody>
        </Column>
      </Page>
      <OriginWindow>
        <OriginNetwork />
        <Tools size={19} cell={18} top={16} right={2} icon={12} />
      </OriginWindow>
      <Pointer width="15" height="21" viewBox="0 0 15 21">
        <path d="M1 1v16l3.600-3.300 2.700 5.800 2.700-1.200-2.600-5.600H13z" fill="#fff" stroke="#222" />
      </Pointer>
    </Window>
  );
}
